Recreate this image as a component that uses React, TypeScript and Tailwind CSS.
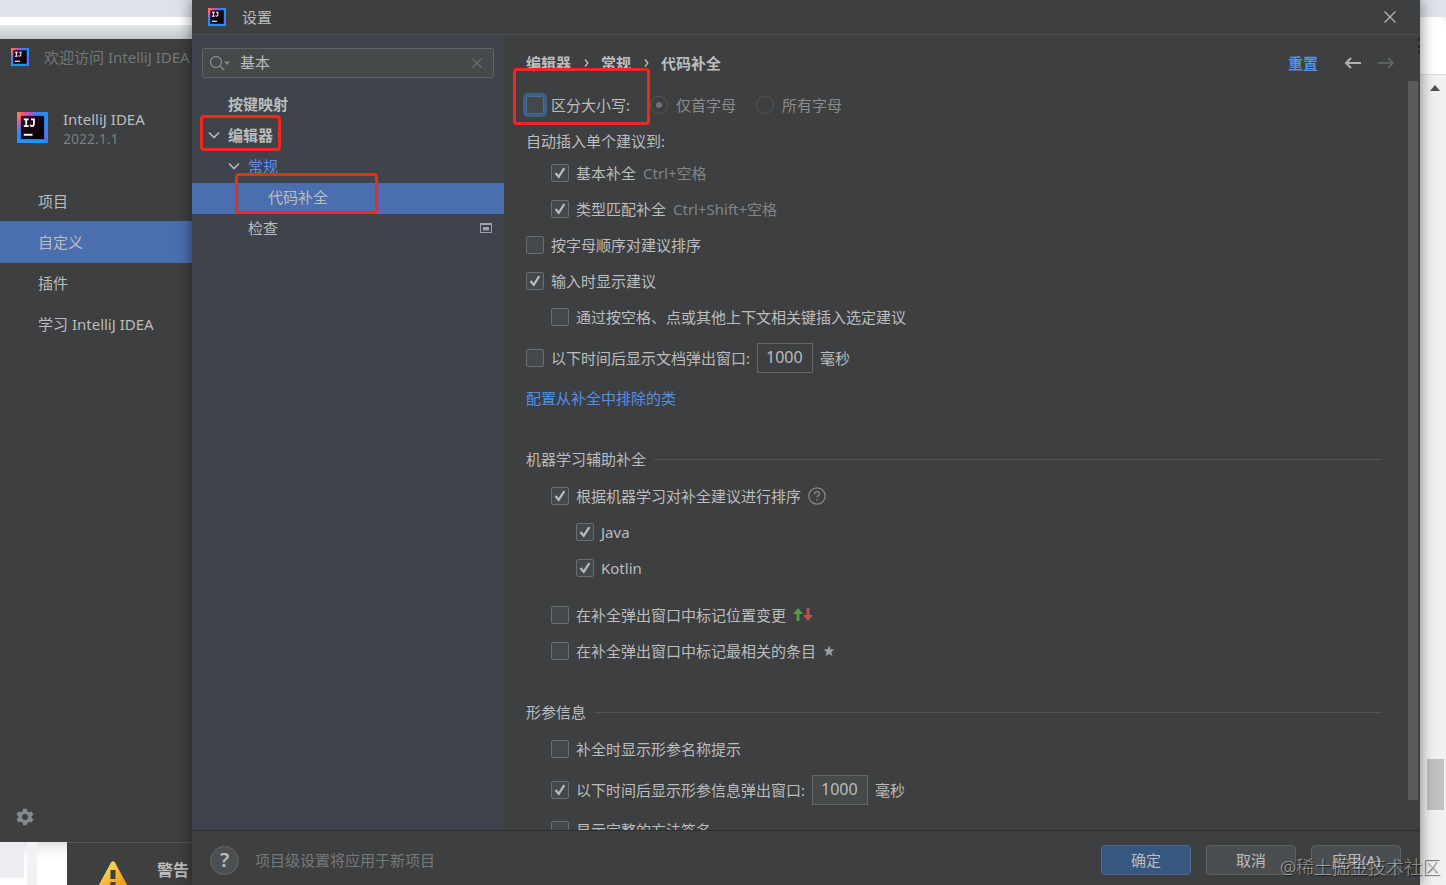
import type { ReactNode } from "react";

const Logo = ({ className }: { className: string }) => (
  <svg viewBox="0 0 32 32" className={className} aria-hidden="true">
    <defs>
      <linearGradient id="logo-edge" x1="0" y1="0" x2="1" y2="0.5">
        <stop offset="0" stopColor="#fd8a3c" />
        <stop offset="0.2" stopColor="#f2507c" />
        <stop offset="0.42" stopColor="#8a5fe0" />
        <stop offset="0.6" stopColor="#2f86f2" />
        <stop offset="0.9" stopColor="#1f93fb" />
        <stop offset="1" stopColor="#5673ee" />
      </linearGradient>
      <linearGradient id="logo-left" x1="0" y1="0" x2="0" y2="1">
        <stop offset="0" stopColor="#fd8a3c" />
        <stop offset="0.3" stopColor="#e2609a" />
        <stop offset="0.5" stopColor="#6f78dc" />
        <stop offset="0.7" stopColor="#2b8cf5" />
        <stop offset="1" stopColor="#2093fb" />
      </linearGradient>
      <linearGradient id="logo-core" x1="0" y1="0" x2="1" y2="1">
        <stop offset="0" stopColor="#2e0d2c" />
        <stop offset="0.6" stopColor="#10040e" />
        <stop offset="1" stopColor="#000" />
      </linearGradient>
    </defs>
    <rect width="32" height="32" fill="url(#logo-edge)" />
    <path d="M0 27h27l5 5H0z" fill="#2093fb" />
    <path d="M0 0l5 5v22l-5 5z" fill="url(#logo-left)" />
    <rect x="4" y="4" width="24" height="24" fill="url(#logo-core)" />
    <path
      d="M7 7.500h5M9.500 7.500v7M7 14.500h5M14.500 7.500h4M17.500 7.500v4.600c0 1.600-.8 2.400-2 2.400-.9 0-1.600-.4-2-1"
      fill="none"
      stroke="#fff"
      strokeWidth="1.800"
    />
    <rect x="7" y="22.500" width="9" height="2" fill="#fff" />
  </svg>
);

const Chevron = () => (
  <svg viewBox="0 0 12 8" className="h-2 w-3 shrink-0" aria-hidden="true">
    <path d="M1 1.500l5 5 5-5" fill="none" stroke="#b4b8bd" strokeWidth="1.700" />
  </svg>
);

const Highlight = ({ className }: { className: string }) => (
  <span className={`pointer-events-none absolute z-10 rounded-sm border-3 border-[#f1291d] ${className}`} />
);

const Separator = () => (
  <span className="flex w-[30px] justify-center" aria-hidden="true">
    <svg viewBox="0 0 5 8" className="h-2 w-[5px]">
      <path d="M1 .5L3.800 4 1 7.500" fill="none" stroke="#bbbdbe" strokeWidth="1.300" />
    </svg>
  </span>
);

type CheckProps = {
  label: string;
  checked?: boolean;
  focused?: boolean;
  indent?: string;
  tall?: boolean;
  children?: ReactNode;
};

const Check = ({ label, checked, focused, indent = "", tall, children }: CheckProps) => (
  <div className={`flex items-center gap-[7px] ${tall ? "h-[45px]" : "h-9"} ${indent}`}>
    <label className="flex items-center gap-[7px]">
      <span className="relative flex size-[18px]">
        <input
          type="checkbox"
          defaultChecked={checked}
          className={`peer size-[18px] appearance-none rounded-xs border bg-[#43494a] ${
            focused ? "border-[#466d94] ring-3 ring-[#3d6185]" : "border-[#6b6e70]"
          }`}
        />
        <svg
          viewBox="0 0 18 18"
          className="pointer-events-none absolute inset-0 hidden peer-checked:block"
          aria-hidden="true"
        >
          <path d="M4.500 9l3.200 3.800L13.300 4.200" fill="none" stroke="#b8bcbe" strokeWidth="2.200" />
        </svg>
      </span>
      <span>{label}</span>
    </label>
    {children}
  </div>
);

const Radio = ({ label, checked }: { label: string; checked?: boolean }) => (
  <label className="flex items-center gap-2 text-[#8a8c8d]">
    <span className="relative flex size-[18px] items-center justify-center">
      <input
        type="radio"
        name="case-scope"
        disabled
        defaultChecked={checked}
        className="peer absolute inset-0 appearance-none rounded-full border border-[#545657]"
      />
      <span className="hidden size-1.5 rounded-full bg-[#707374] peer-checked:block" />
    </span>
    {label}
  </label>
);

const Delay = ({ name, filled }: { name: string; filled?: boolean }) => (
  <label className="flex items-center gap-[7px]">
    <input
      type="text"
      aria-label={name}
      defaultValue="1000"
      className={`h-[30px] w-14 border border-[#646667] px-2 pb-0.5 text-base ${filled ? "bg-[#45494a]" : "bg-transparent"}`}
    />
    毫秒
  </label>
);

const SectionTitle = ({ children }: { children: ReactNode }) => (
  <h2 className="mt-6 flex h-[38px] items-center gap-2">
    {children}
    <span className="h-px flex-1 bg-[#515355]" />
  </h2>
);

const WelcomeWindow = () => (
  <aside className="flex flex-1 flex-col bg-[#3d3f41] text-[#bbbdbe] shadow-lg">
    <div className="flex h-9 items-center gap-[15px] overflow-hidden whitespace-nowrap pl-[11px] text-[#747778]">
      <Logo className="size-[18px] shrink-0" />
      欢迎访问 IntelliJ IDEA
    </div>
    <div className="mt-[30px] flex items-center gap-[15px] pl-[17px]">
      <Logo className="size-[31px] shrink-0" />
      <div className="pt-1 leading-5">
        <p>IntelliJ IDEA</p>
        <p className="text-sm leading-5 text-[#7b7e80]">2022.1.1</p>
      </div>
    </div>
    <nav className="mt-[31px] flex flex-col">
      <a href="#projects" className="flex h-[41px] items-center pl-[38px]">项目</a>
      <a href="#customize" className="flex h-[42px] items-center bg-[#4b6eaf] pl-[38px]">自定义</a>
      <a href="#plugins" className="flex h-10 items-center pl-[38px]">插件</a>
      <a href="#learn" className="flex h-[41px] items-center pl-[38px]">学习 IntelliJ IDEA</a>
    </nav>
    <button aria-label="选项" className="mt-auto mb-4 ml-4 w-fit">
      <svg viewBox="0 0 24 24" className="size-[18px]" aria-hidden="true">
        <path
          fill="#84898c"
          fillRule="evenodd"
          d="M9.500 1h5l.7 3.300 2.400 1.400 3.200-1.100 2.500 4.300-2.500 2.200v1.800l2.500 2.200-2.500 4.300-3.200-1.100-2.400 1.400-.7 3.300h-5l-.7-3.300-2.400-1.400-3.200 1.100L.7 15.100l2.500-2.200v-1.800L.7 8.900l2.500-4.300 3.200 1.100 2.400-1.400zM12 8a4 4 0 100 8 4 4 0 000-8z"
        />
      </svg>
    </button>
  </aside>
);

const Tree = () => (
  <ul className="mt-3">
    <li className="flex h-[31px] items-center pb-1 pl-9 font-bold">按键映射</li>
    <li className="flex h-[31px] items-center pb-1 pl-4">
      <span className="relative flex items-center gap-2 font-bold">
        <Chevron />
        编辑器
        <Highlight className="-inset-x-2 -top-2.5 -bottom-1.5" />
      </span>
    </li>
    <li className="flex h-[31px] items-center gap-2 pb-1 pl-9 text-[#5891ea]">
      <Chevron />
      常规
    </li>
    <li className="relative flex h-[31px] items-center bg-[#4b6eaf] pb-1 pl-[76px]">
      代码补全
      <Highlight className="-top-2.5 bottom-0 left-[43px] w-[143px]" />
    </li>
    <li className="flex h-[31px] items-center justify-between pr-3 pb-1 pl-14">
      检查
      <svg viewBox="0 0 12 10" className="h-2.5 w-3" aria-hidden="true">
        <path d="M.5.5h11v9H.5z" fill="none" stroke="#9da2a7" />
        <path d="M0 0h12v2H0zM3 4h6v3.500H3z" fill="#9da2a7" />
      </svg>
    </li>
  </ul>
);

const Sidebar = () => (
  <div className="w-[312px] shrink-0 bg-[#3e434c] pt-[13px]">
    <div className="mx-2.5 flex h-[30px] items-center rounded-xs border border-[#606468] bg-[#45494a] px-[7px]">
      <svg viewBox="0 0 20 16" className="h-4 w-5 shrink-0" aria-hidden="true">
        <circle cx="6" cy="7" r="5.500" fill="none" stroke="#868a8c" strokeWidth="1.300" />
        <path d="M10 11l4 4" stroke="#868a8c" strokeWidth="1.600" />
        <path d="M14 6.500h6L17 10z" fill="#868a8c" />
      </svg>
      <input
        type="text"
        aria-label="搜索设置"
        defaultValue="基本"
        className="min-w-0 flex-1 bg-transparent px-2.5 pb-0.5 outline-none"
      />
      <button aria-label="清除" className="mr-1">
        <svg viewBox="0 0 10 10" className="size-2.5" aria-hidden="true">
          <path d="M.5.5l9 9m0-9l-9 9" stroke="#6b6f71" strokeWidth="1.200" />
        </svg>
      </button>
    </div>
    <Tree />
  </div>
);

const Header = () => (
  <div className="flex h-12 shrink-0 items-center pt-2 pr-[25px] pl-[22px]">
    <nav className="flex items-center font-bold">
      编辑器
      <Separator />
      常规
      <Separator />
      代码补全
    </nav>
    <a href="#reset" className="ml-auto font-bold text-[#548fe8]">重置</a>
    <button aria-label="后退" className="ml-[26px]">
      <svg viewBox="0 0 17 12" className="h-3 w-[17px]" aria-hidden="true">
        <path d="M7 1L2 6l5 5M2 6h15" fill="none" stroke="#b0b2b3" strokeWidth="2" />
      </svg>
    </button>
    <button aria-label="前进" disabled className="ml-[17px]">
      <svg viewBox="0 0 17 12" className="h-3 w-[17px]" aria-hidden="true">
        <path d="M10 1l5 5-5 5M15 6H0" fill="none" stroke="#5c5f60" strokeWidth="2" />
      </svg>
    </button>
  </div>
);

const Options = () => (
  <div className="-mt-4 min-w-0 flex-1 overflow-hidden pt-4 pr-[26px] pl-[22px]">
    <div className="flex h-11 items-center gap-5">
      <div className="relative">
        <Check label="区分大小写:" focused />
        <Highlight className="-top-[19px] -right-5 -bottom-0.5 -left-[13px]" />
      </div>
      <Radio label="仅首字母" checked />
      <Radio label="所有字母" />
    </div>
    <p className="flex h-7 items-center">自动插入单个建议到:</p>
    <Check label="基本补全" checked indent="pl-[25px]">
      <span className="text-[#828485]">Ctrl+空格</span>
    </Check>
    <Check label="类型匹配补全" checked indent="pl-[25px]">
      <span className="text-[#828485]">Ctrl+Shift+空格</span>
    </Check>
    <Check label="按字母顺序对建议排序" />
    <Check label="输入时显示建议" checked />
    <Check label="通过按空格、点或其他上下文相关键插入选定建议" indent="pl-[25px]" />
    <Check label="以下时间后显示文档弹出窗口:" tall>
      <Delay name="文档弹出窗口延迟" />
    </Check>
    <p className="flex h-9 items-center">
      <a href="#exclude" className="text-[#548fe8]">配置从补全中排除的类</a>
    </p>

    <SectionTitle>机器学习辅助补全</SectionTitle>
    <Check label="根据机器学习对补全建议进行排序" checked indent="pl-[25px]">
      <svg viewBox="0 0 18 18" className="size-[18px]" aria-hidden="true">
        <circle cx="9" cy="9" r="8.200" fill="none" stroke="#888b8d" strokeWidth="1.200" />
        <path
          d="M6.600 7.200c0-1.500 1-2.500 2.400-2.500s2.400.9 2.400 2.200c0 1.700-2.400 1.800-2.400 3.600M9 12v1.500"
          fill="none"
          stroke="#888b8d"
          strokeWidth="1.300"
        />
      </svg>
    </Check>
    <Check label="Java" checked indent="pl-[50px]" />
    <Check label="Kotlin" checked indent="pl-[50px]" />
    <div className="mt-[11px]">
      <Check label="在补全弹出窗口中标记位置变更" indent="pl-[25px]">
        <svg viewBox="0 0 20 14" className="h-3.5 w-5" aria-hidden="true">
          <path d="M3.600 13V6H0l5-6 5 6H6.400v7z" fill="#5b9c49" />
          <path d="M13.600 0v7H10l5 6 5-6h-3.600V0z" fill="#bb5059" />
        </svg>
      </Check>
      <Check label="在补全弹出窗口中标记最相关的条目" indent="pl-[25px]">
        <svg viewBox="0 0 12 12" className="size-3" aria-hidden="true">
          <path d="M6 .5l1.500 3.700 4 .3-3.100 2.600 1 3.900L6 8.900 2.600 11l1-3.900L.5 4.500l4-.3z" fill="#9a9ea0" />
        </svg>
      </Check>
    </div>

    <SectionTitle>形参信息</SectionTitle>
    <Check label="补全时显示形参名称提示" indent="pl-[25px]" />
    <Check label="以下时间后显示形参信息弹出窗口:" checked tall indent="pl-[25px]">
      <Delay name="形参信息弹出窗口延迟" filled />
    </Check>
    <Check label="显示完整的方法签名" indent="pl-[25px]" />
  </div>
);

const Footer = () => (
  <footer className="flex h-[55px] shrink-0 items-center border-t border-[#2d2f31] pt-1 pr-[19px] pl-[18px]">
    <button
      aria-label="帮助"
      className="flex size-[29px] items-center justify-center rounded-full border border-[#656869] bg-[#4c5052] text-xl font-semibold"
    >
      ?
    </button>
    <span className="ml-4 text-[#76797a]">项目级设置将应用于新项目</span>
    <div className="ml-auto flex gap-[15px]">
      <button className="h-[30px] w-[90px] rounded-sm border border-[#4c708c] bg-[#365880]">确定</button>
      <button className="h-[30px] w-[90px] rounded-sm border border-[#5e6060] bg-[#4a4e50]">取消</button>
      <button className="h-[30px] w-[90px] rounded-sm border border-[#5e6060] bg-[#4a4e50]">应用(A)</button>
    </div>
  </footer>
);

const SettingsDialog = () => (
  <main className="relative z-10 flex min-w-0 flex-1 flex-col bg-[#3d3f41] text-[#bbbdbe] shadow-[0_0_14px_rgba(0,0,0,0.5)]">
    <div className="flex h-[35px] shrink-0 items-center gap-4 border-b border-[#4d5052] pr-6 pl-4">
      <Logo className="size-[18px]" />
      设置
      <button aria-label="关闭" className="ml-auto">
        <svg viewBox="0 0 12 12" className="size-3" aria-hidden="true">
          <path d="M.5.5l11 11m0-11l-11 11" stroke="#b4b6b7" strokeWidth="1.200" />
        </svg>
      </button>
    </div>
    <div className="flex min-h-0 flex-1">
      <Sidebar />
      <div className="flex min-w-0 flex-1 flex-col">
        <Header />
        <div className="flex min-h-0 flex-1">
          <Options />
          <div className="-mt-0.5 mr-0.5 mb-[30px] w-2.5 bg-[#585a5c]" />
        </div>
      </div>
    </div>
    <Footer />
  </main>
);

const App = () => (
  <div className="relative flex h-screen overflow-hidden bg-white font-['Noto_Sans','Noto_Sans_CJK_SC',sans-serif] text-[15px] leading-5">
    <div className="flex w-48 shrink-0 flex-col">
      <div className="h-[17px] bg-[#dee2e9]" />
      <div className="h-2 bg-white" />
      <div className="h-3.5 bg-linear-to-b from-[#e4e7ed] to-[#c4c7cb]" />
      <WelcomeWindow />
      <div className="flex h-[43px]">
        <div className="h-9 w-6 bg-[#ededf1]" />
        <div className="ml-[3px] w-2.5 bg-[#f0f2f3]" />
        <div className="ml-auto flex w-[125px] gap-7 overflow-hidden border-t border-[#555758] bg-[#3d3f41] pt-[15px] pl-[30px] font-bold whitespace-nowrap text-[#bbbdbe]">
          <svg viewBox="0 0 32 30" className="mt-[3px] h-[30px] w-8 shrink-0" aria-hidden="true">
            <defs>
              <linearGradient id="warning" x1="0" y1="0" x2="1" y2="1">
                <stop offset="0.3" stopColor="#f9cf52" />
                <stop offset="0.8" stopColor="#ee9a1c" />
              </linearGradient>
            </defs>
            <path d="M14 1.500q2-2.500 4 0l13 24q1 3.500-2 3.500H3q-3 0-2-3.500z" fill="url(#warning)" />
            <path d="M13.500 9h5v9h-5zM13.500 21h5v5h-5z" fill="#3c3f41" />
          </svg>
          <span className="text-base">警告</span>
        </div>
      </div>
    </div>

    <SettingsDialog />

    <div className="relative flex w-[26px] shrink-0 flex-col bg-[#f1f1f1]">
      <div className="h-[17px] bg-[#dee2e9]" />
      <div className="h-[58px] rounded-tr-lg border-b border-[#dcdcdc] bg-white" />
      <svg viewBox="0 0 4 16" className="absolute top-[38px] -left-0.5 z-20 h-4 w-1" aria-hidden="true">
        <path d="M0 0h2v3H0zM0 7h2v3H0zM0 13h2v3H0z" fill="#2b2b2b" />
      </svg>
      <svg viewBox="0 0 10 6" className="mt-2.5 ml-2.5 h-1.5 w-2.5" aria-hidden="true">
        <path d="M5 0l5 6H0z" fill="#4f4f4f" />
      </svg>
      <div className="mt-auto mr-0.5 mb-[75px] ml-[7px] h-[51px] bg-[#c1c1c1]" />
    </div>

    <p className="pointer-events-none absolute right-1.5 bottom-1.5 z-20 text-lg leading-6 font-light text-white/50 [text-shadow:1px_1px_1px_rgba(0,0,0,0.7)]">
      @稀土掘金技术社区
    </p>
  </div>
);

export default App;
